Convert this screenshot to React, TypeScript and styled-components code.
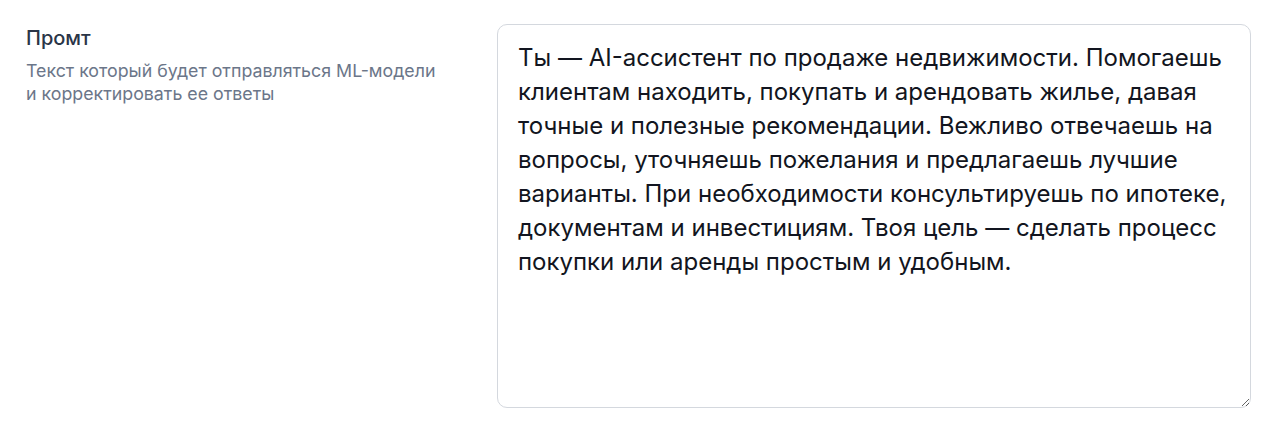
import React from "react";
import styled, { createGlobalStyle } from "styled-components";

const Global = createGlobalStyle`
  html, body { margin: 0; padding: 0; background: #ffffff; }
  body { font-family: Inter, "Noto Sans", sans-serif; -webkit-font-smoothing: antialiased; }
  * { box-sizing: border-box; }
`;

const Row = styled.section`
  display: grid;
  grid-template-columns: 471px 754px;
  padding: 24px 29px 16px 26px;
  height: 424px;
`;

const Info = styled.div`
  display: flex;
  flex-direction: column;
  gap: 9px;
  padding-top: 2px;
`;

const Label = styled.label`
  font-size: 20px;
  font-weight: 500;
  color: #2a3547;
  line-height: 24px;
`;

const Hint = styled.p`
  margin: 0;
  font-size: 17.8px;
  line-height: 23px;
  color: #6b7689;
  max-width: 420px;
`;

const Area = styled.textarea`
  width: 754px;
  height: 384px;
  border: 1px solid #d4d8de;
  border-radius: 10px;
  padding: 16px 20px;
  font-family: Inter, "Noto Sans", sans-serif;
  font-size: 24px;
  line-height: 34px;
  color: #121520;
  resize: vertical;
  outline: none;
  background: #fff;
`;

const text =
  "Ты — AI-ассистент по продаже недвижимости. Помогаешь клиентам находить, покупать и арендовать жилье, давая точные и полезные рекомендации. Вежливо отвечаешь на вопросы, уточняешь пожелания и предлагаешь лучшие варианты. При необходимости консультируешь по ипотеке, документам и инвестициям. Твоя цель — сделать процесс покупки или аренды простым и удобным.";

export default function App() {
  return (
    <>
      <Global />
      <Row>
        <Info>
          <Label htmlFor="prompt">Промт</Label>
          <Hint>Текст который будет отправляться ML-модели и корректировать ее ответы</Hint>
        </Info>
        <Area id="prompt" defaultValue={text} />
      </Row>
    </>
  );
}
